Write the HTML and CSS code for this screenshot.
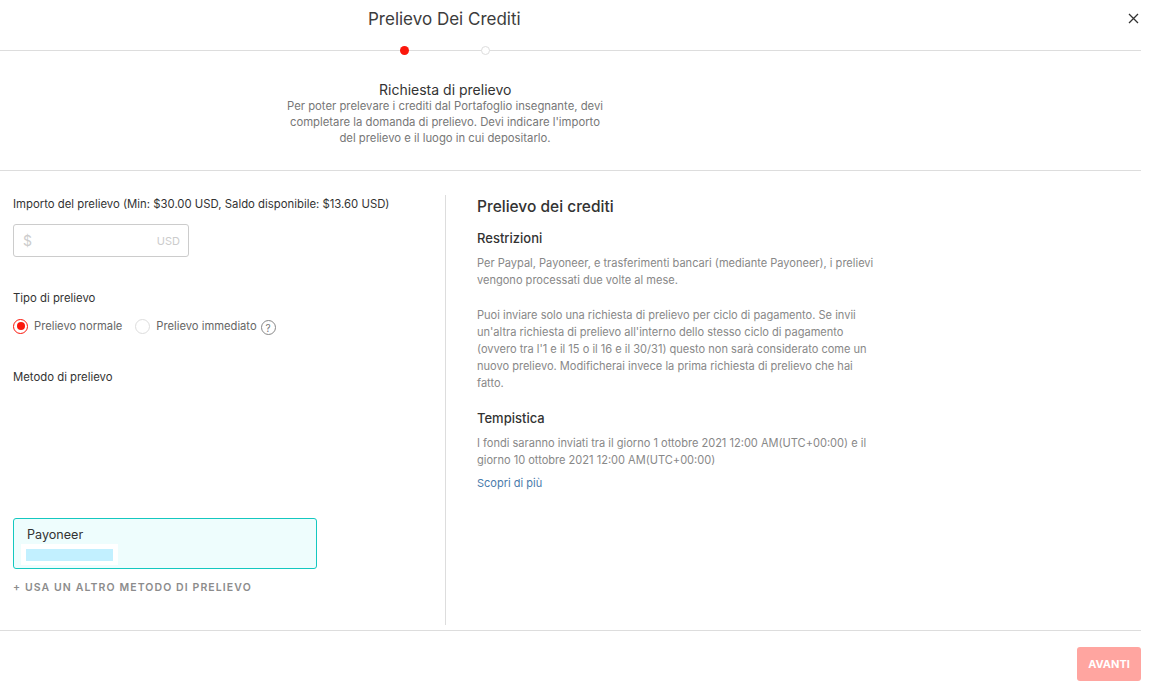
FILE: index.html
```html
<!DOCTYPE html>
<html lang="en">
<head>
    <meta charset="UTF-8">
    <meta name="viewport" content="width=device-width, initial-scale=1.0">
    <title>Prelievo Dei Crediti</title>
    <link rel="stylesheet" href="styles.css">
</head>
<body>
<div class="modal">
    <div class="header">
        <h1 class="title">Prelievo Dei Crediti</h1>
        <svg class="close" width="11" height="11" viewBox="0 0 11 11"><path d="M1 1L10 10M10 1L1 10" stroke="#333" stroke-width="1.3" fill="none"/></svg>
        <span class="dot dot-active"></span>
        <span class="dot dot-next"></span>
    </div>

    <div class="intro">
        <h2 class="intro-title">Richiesta di prelievo</h2>
        <p class="intro-text">Per poter prelevare i crediti dal Portafoglio insegnante, devi<br>completare la domanda di prelievo. Devi indicare l'importo<br>del prelievo e il luogo in cui depositarlo.</p>
    </div>

    <div class="content">
        <div class="left">
            <div class="label">Importo del prelievo (Min: $30.00 USD, Saldo disponibile: $13.60 USD)</div>
            <div class="amount">
                <span class="dollar">$</span>
                <span class="currency">USD</span>
            </div>

            <div class="label label-type">Tipo di prelievo</div>
            <div class="radios">
                <span class="radio radio-on"></span>
                <span class="radio-text">Prelievo normale</span>
                <span class="radio radio-off"></span>
                <span class="radio-text">Prelievo immediato</span>
                <span class="help">?</span>
            </div>

            <div class="label label-method">Metodo di prelievo</div>
            <div class="method">
                <div class="method-name">Payoneer</div>
                <div class="method-mask"><span></span></div>
            </div>
            <div class="other-method">+ USA UN ALTRO METODO DI PRELIEVO</div>
        </div>

        <div class="right">
            <h3 class="info-title">Prelievo dei crediti</h3>
            <h4 class="info-head">Restrizioni</h4>
            <p class="info-text info-first">Per Paypal, Payoneer, e trasferimenti bancari (mediante Payoneer), i prelievi<br>vengono processati due volte al mese.</p>
            <p class="info-text info-gap">Puoi inviare solo una richiesta di prelievo per ciclo di pagamento. Se invii<br>un'altra richiesta di prelievo all'interno dello stesso ciclo di pagamento<br>(ovvero tra l'1 e il 15 o il 16 e il 30/31) questo non sarà considerato come un<br>nuovo prelievo. Modificherai invece la prima richiesta di prelievo che hai<br>fatto.</p>
            <h4 class="info-head info-head-2">Tempistica</h4>
            <p class="info-text info-time">I fondi saranno inviati tra il giorno 1 ottobre 2021 12:00 AM(UTC+00:00) e il<br>giorno 10 ottobre 2021 12:00 AM(UTC+00:00)</p>
            <a class="more" href="#">Scopri di più</a>
        </div>
    </div>

    <div class="footer">
        <button class="next">AVANTI</button>
    </div>
</div>
</body>
</html>
```

FILE: styles.css
```css
* {
    box-sizing: border-box;
}

body {
    margin: 0;
    background-color: white;
    font-family: Inter, "Liberation Sans", sans-serif;
    color: #333;
    overflow: hidden;
}

.modal {
    width: 1141px;
    height: 687px;
}

.header {
    position: relative;
    height: 51px;
    border-bottom: 1px solid #ddd;
}

.title {
    margin: 0;
    padding: 7px 0 0 368px;
    font-size: 17px;
    line-height: 24px;
    font-weight: 400;
    color: #3c3c3c;
}

.close {
    position: absolute;
    left: 1128px;
    top: 13px;
}

.dot {
    position: absolute;
    top: 46px;
    width: 9px;
    height: 9px;
    border-radius: 50%;
}

.dot-active {
    left: 400px;
    background-color: #fb170c;
}

.dot-next {
    left: 481px;
    background-color: white;
    border: 1px solid #ddd;
}

.intro {
    height: 120px;
    border-bottom: 1px solid #ddd;
    padding-top: 30px;
    width: 100%;
}

.intro-title {
    margin: 0 0 0 379px;
    font-size: 14px;
    line-height: 17px;
    font-weight: 400;
    color: #333;
}

.intro-text {
    margin: 0;
    width: 890px;
    text-align: center;
    font-size: 11.3px;
    line-height: 16px;
    color: #777;
}

.content {
    display: flex;
    height: 460px;
    border-bottom: 1px solid #ddd;
    padding-top: 24px;
}

.left {
    width: 446px;
    height: 430px;
    padding: 0 0 0 13px;
    border-right: 1px solid #ddd;
}

.label {
    font-size: 11.35px;
    line-height: 18px;
    color: #333;
}

.amount {
    display: flex;
    justify-content: space-between;
    align-items: center;
    width: 176px;
    height: 33px;
    margin-top: 11px;
    padding: 0 8px 0 9px;
    border: 1px solid #ccc;
    border-radius: 3px;
}

.dollar {
    font-size: 14px;
    color: #ccc;
}

.currency {
    font-size: 11px;
    color: #ccc;
}

.label-type {
    margin-top: 32px;
}

.radios {
    display: flex;
    align-items: center;
    margin-top: 10px;
    height: 18px;
}

.radio {
    flex: none;
    width: 15px;
    height: 15px;
    border-radius: 50%;
    background-color: white;
}

.radio-on {
    border: 1px solid #fb170c;
    position: relative;
}

.radio-on:before {
    content: "";
    position: absolute;
    left: 2.5px;
    top: 2.5px;
    width: 8px;
    height: 8px;
    border-radius: 50%;
    background-color: #fb170c;
}

.radio-off {
    border: 1px solid #ddd;
    margin-left: 13px;
}

.radio-text {
    margin-left: 6px;
    font-size: 11.2px;
    color: #666;
}

.help {
    flex: none;
    width: 15px;
    height: 15px;
    margin: 3px 0 0 4px;
    border: 1px solid #888;
    border-radius: 50%;
    font-size: 10px;
    line-height: 14px;
    text-align: center;
    color: #777;
}

.label-method {
    margin-top: 33px;
}

.method {
    width: 304px;
    height: 51px;
    margin-top: 132px;
    padding: 8px 0 0 7px;
    background-color: #eefdfd;
    border: 1px solid #14c8c0;
    border-radius: 3px;
}

.method-name {
    padding-left: 6px;
    font-size: 12.6px;
    line-height: 16px;
    color: #333;
}

.method-mask {
    width: 97px;
    height: 21px;
    margin-top: 1px;
    padding: 5px;
    background-color: white;
}

.method-mask span {
    display: block;
    width: 87px;
    height: 12px;
    background-color: #c2f0ff;
}

.other-method {
    margin-top: 11px;
    font-size: 10.5px;
    line-height: 16px;
    font-weight: 600;
    letter-spacing: 1.1px;
    color: #8c8c8c;
}

.right {
    padding-left: 31px;
}

.info-title {
    margin: 0;
    font-size: 15.5px;
    line-height: 24px;
    font-weight: 500;
    color: #333;
}

.info-head {
    margin: 10px 0 0;
    font-size: 13px;
    line-height: 18px;
    font-weight: 500;
    color: #333;
}

.info-head-2 {
    margin-top: 17px;
}

.info-text {
    margin: 0;
    font-size: 11.05px;
    line-height: 17px;
    color: #888;
}

.info-first {
    margin-top: 8px;
}

.info-gap {
    margin-top: 18px;
}

.info-time {
    margin-top: 8px;
}

.more {
    display: block;
    margin-top: 6px;
    font-size: 11px;
    line-height: 17px;
    color: #4a7bab;
    text-decoration: none;
}

.footer {
    display: flex;
    justify-content: flex-end;
    padding-top: 16px;
}

.next {
    width: 64px;
    height: 34px;
    border: none;
    border-radius: 3px;
    background-color: #ffa5a0;
    color: white;
    font-family: inherit;
    font-size: 11px;
    font-weight: 700;
}
```
